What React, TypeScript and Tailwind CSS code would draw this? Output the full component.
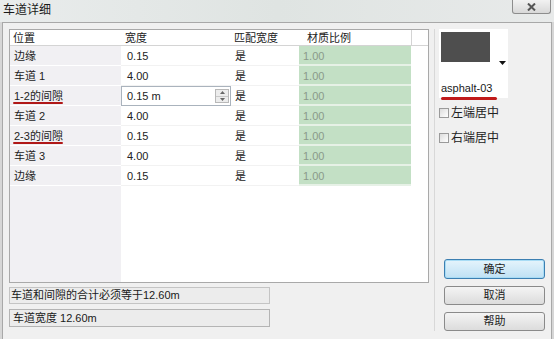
import React from 'react'

const font = { fontFamily: '"Liberation Sans", "Noto Sans CJK SC", sans-serif' }

type Row = { pos: string; width: string; mark?: boolean; spin?: boolean }

const rows: Row[] = [
  { pos: '边缘', width: '0.15' },
  { pos: '车道 1', width: '4.00' },
  { pos: '1-2的间隙', width: '0.15 m', mark: true, spin: true },
  { pos: '车道 2', width: '4.00' },
  { pos: '2-3的间隙', width: '0.15', mark: true },
  { pos: '车道 3', width: '4.00' },
  { pos: '边缘', width: '0.15' },
]

function Spinner() {
  return (
    <div className="flex h-[14px] w-[14px] flex-col border border-[#b8b8b8] bg-[#ececec]">
      <div className="flex flex-1 items-center justify-center border-b border-[#c8c8c8]">
        <svg width="5" height="3" viewBox="0 0 5 3"><path d="M0 3 L2.5 0 L5 3 Z" fill="#666" /></svg>
      </div>
      <div className="flex flex-1 items-center justify-center">
        <svg width="5" height="3" viewBox="0 0 5 3"><path d="M0 0 L2.5 3 L5 0 Z" fill="#666" /></svg>
      </div>
    </div>
  )
}

function Check({ label }: { label: string }) {
  return (
    <div className="flex items-center gap-[2px] text-[12px] text-[#222]">
      <div className="h-[10px] w-[10px] border border-[#9a9a9a] bg-gradient-to-br from-[#dcdcdc] to-white" />
      <span>{label}</span>
    </div>
  )
}

function Btn({ label, primary }: { label: string; primary?: boolean }) {
  return (
    <div
      className={
        primary
          ? 'flex h-[20px] w-[101px] items-center justify-center rounded-[3px] border border-[#3c7fb1] bg-gradient-to-b from-[#e5f4fc] to-[#bfe1f4] text-[11px] text-[#222] shadow-[inset_0_0_0_1px_#a8dcf5]'
          : 'flex h-[19px] w-[101px] items-center justify-center rounded-[3px] border border-[#8a8a8a] bg-gradient-to-b from-[#f4f4f4] to-[#dcdcdc] text-[11px] text-[#222]'
      }
    >
      {label}
    </div>
  )
}

export default function App() {
  return (
    <div className="flex h-[339px] w-[554px] flex-col overflow-hidden bg-[#d6d6d6]" style={font}>
      {/* title bar */}
      <div className="flex h-[22px] items-start justify-between bg-gradient-to-r from-[#e9ecec] via-[#dfe4e2] to-[#e8eaea] pl-[3px]">
        <span className="mt-[2px] text-[12px] leading-[16px] text-[#1a1a1a]">车道详细</span>
        <div className="mr-[3px] flex h-[14px] w-[39px] items-center justify-center rounded-b-[3px] border border-t-0 border-[#8d8d8d] bg-gradient-to-b from-[#f2f2f2] to-[#d8d8d8]">
          <svg width="9" height="8" viewBox="0 0 9 8">
            <path d="M1 0.5 L8 7.5 M8 0.5 L1 7.5" stroke="#555" strokeWidth="2" />
          </svg>
        </div>
      </div>

      {/* dialog body */}
      <div className="mx-[2px] flex flex-1 gap-[5px] border-x border-t border-[#a8a8a8] bg-[#f0f0f0] px-[6px] pt-[6px] pb-[8px]">
        {/* left side */}
        <div className="flex w-[425px] flex-col">
          <div className="flex h-[254px] border border-[#a9a9a9] bg-white text-[11px] leading-[20px] text-[#222]">
            {/* position column */}
            <div className="flex w-[111px] flex-col bg-[#f1f0f3]">
              <div className="h-[16px] border-b border-[#d4d4d4] bg-white pl-[3px] leading-[16px]">位置</div>
              {rows.map((r, i) => (
                <div key={i} className="relative h-[20px] border-b border-white pl-[4px]">
                  {r.pos}
                  {r.mark && (
                    <div className="absolute bottom-[1px] left-[3px] h-[2px] w-[50px] rounded-full bg-[#b01818]" />
                  )}
                </div>
              ))}
            </div>
            {/* width column */}
            <div className="flex w-[110px] flex-col">
              <div className="h-[16px] border-b border-[#d4d4d4] pl-[4px] leading-[16px]">宽度</div>
              {rows.map((r, i) =>
                r.spin ? (
                  <div key={i} className="flex h-[20px] items-center justify-between border border-[#aab3bd] pr-[1px] pl-[5px]">
                    <span>{r.width}</span>
                    <Spinner />
                  </div>
                ) : (
                  <div key={i} className="h-[20px] border-b border-[#f2f2f2] pl-[6px]">{r.width}</div>
                )
              )}
            </div>
            {/* match column */}
            <div className="flex w-[68px] flex-col">
              <div className="h-[16px] border-b border-[#d4d4d4] pl-[3px] leading-[16px]">匹配宽度</div>
              {rows.map((_, i) => (
                <div key={i} className="h-[20px] border-b border-[#f2f2f2] pl-[4px]">是</div>
              ))}
            </div>
            {/* material column */}
            <div className="flex w-[112px] flex-col">
              <div className="h-[16px] border-b border-[#d4d4d4] pl-[8px] leading-[16px]">材质比例</div>
              {rows.map((_, i) => (
                <div key={i} className="h-[20px] border-b-2 border-[#e6f1e6] bg-[#c3e0c5] pl-[4px] text-[#8a9a8a]">1.00</div>
              ))}
            </div>
            <div className="flex flex-1 flex-col">
              <div className="h-[16px] border-b border-l border-[#d4d4d4]" />
            </div>
          </div>

          <div className="mt-[4px] flex h-[17px] w-[261px] items-center border border-[#c4c4c4] bg-[#ececec] pl-[1px] text-[11px] text-[#1a1a1a]">
            车道和间隙的合计必须等于12.60m
          </div>
          <div className="mt-[5px] flex h-[18px] w-[261px] items-center border border-[#b4b4b4] bg-[#ececec] pl-[3px] text-[11px] text-[#1a1a1a]">
            车道宽度 12.60m
          </div>
        </div>

        {/* right side */}
        <div className="flex flex-1 flex-col border-l border-[#d8d8d8] pl-[4px]">
          <div className="relative h-[69px] w-[69px] bg-white">
            <div className="ml-[2px] mt-[3px] h-[30px] w-[49px] bg-[#4e4e4e]" />
            <svg className="absolute left-[60px] top-[32px]" width="7" height="4" viewBox="0 0 7 4">
              <path d="M0 0 L7 0 L3.5 4 Z" fill="#111" />
            </svg>
            <div className="absolute left-[2px] top-[51px] text-[11px] leading-[16px] text-[#1a1a1a]">asphalt-03</div>
            <div className="absolute left-[2px] top-[68px] h-[3px] w-[56px] rounded-full bg-[#c01a1a]" />
          </div>
          <div className="mt-[6px] flex flex-col gap-[7px]">
            <Check label="左端居中" />
            <Check label="右端居中" />
          </div>
          <div className="mt-auto flex flex-col gap-[7px] pl-[5px]">
            <Btn label="确定" primary />
            <Btn label="取消" />
            <Btn label="帮助" />
          </div>
        </div>
      </div>
    </div>
  )
}
